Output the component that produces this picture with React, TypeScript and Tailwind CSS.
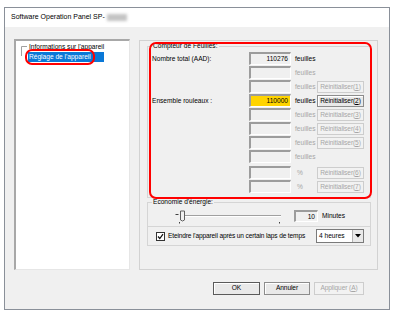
import React from 'react'

type Row = {
  label?: string
  value?: string
  yellow?: boolean
  unit: string
  unitOn?: boolean
  btn?: string
  btnOn?: boolean
  gap?: boolean
}

const rows: Row[] = [
  { label: 'Nombre total (AAD):', value: '110276', unit: 'feuilles', unitOn: true },
  { unit: 'feuilles' },
  { unit: 'feuilles', btn: '1' },
  { label: 'Ensemble rouleaux :', value: '110000', yellow: true, unit: 'feuilles', unitOn: true, btn: '2', btnOn: true },
  { unit: 'feuilles', btn: '3' },
  { unit: 'feuilles', btn: '4' },
  { unit: 'feuilles', btn: '5' },
  { unit: 'feuilles' },
  { unit: '%', btn: '6', gap: true },
  { unit: '%', btn: '7' },
]

function WinButton({ children, enabled, isDefault, width }: { children: React.ReactNode; enabled?: boolean; isDefault?: boolean; width: string }) {
  return (
    <div
      className={
        'flex items-center justify-center h-[12px] leading-none whitespace-nowrap tracking-[-0.1px] ' +
        width +
        (enabled
          ? isDefault
            ? ' border border-[#5a5a5a] bg-[#e9e9e9] text-black shadow-[inset_1px_1px_0_#ffffff]'
            : ' border border-[#8c8c8c] bg-[#e9e9e9] text-black shadow-[inset_1px_1px_0_#ffffff]'
          : ' border border-[#cdcdcd] bg-[#f2f2f2] text-[#a6a6a6]')
      }
    >
      {children}
    </div>
  )
}

export default function App() {
  return (
    <div className="w-[393px] h-[315px] bg-white pt-[7px] pl-[4px] font-['Liberation_Sans',Arial,sans-serif] text-[6.6px] text-black">
      <div className="w-[386px] h-[303px] border border-[#8a9099] flex flex-col">
        {/* title bar */}
        <div className="h-[19px] bg-white flex items-center pl-[6px] text-[7px]">
          <span>Software Operation Panel SP-</span>
          <span className="ml-[2px] w-[20px] h-[7px] bg-[#c4c4c4] blur-[1.5px]" />
        </div>

        <div className="flex-1 bg-[#f0f0f0] flex flex-col">
          <div className="flex pt-[12px] pl-[9px] gap-[9px]">
            {/* tree */}
            <div className="relative w-[116px] h-[231px] bg-white border-t-2 border-l-2 border-t-[#a8a8a8] border-l-[#a8a8a8] border-r border-b border-r-[#e6e6e6] border-b-[#e6e6e6]">
              <div className="flex pt-[1px]">
                <svg width="7" height="20" className="shrink-0 ml-[5px] mt-[3px]">
                  <path d="M0.5 1.5 H6 M0.5 1.5 V11" stroke="#a0a0a0" strokeWidth="1" fill="none" />
                </svg>
                <div className="flex flex-col">
                  <div className="h-[10px] leading-[10px] pl-[1px]">Informations sur l'appareil</div>
                  <div className="h-[10px] leading-[10px] px-[1px] bg-[#0a78d7] text-white">Réglage de l'appareil</div>
                </div>
              </div>
              <div className="absolute left-[9px] top-[8px] w-[70px] h-[16px] border-2 border-[#ff0000] rounded-[7px]" />
            </div>

            {/* panel */}
            <div className="relative mt-[1px] w-[239px] h-[230px] border border-[#d2d2d2] pl-[7px] pr-[6px]">
              <fieldset className="mt-[1px] border border-[#d5d5d5] pb-[3px]">
                <legend className="ml-[4px] px-[1px] leading-[8px]">Compteur de Feuilles:</legend>
                <div className="flex flex-col pt-[2px] pl-[4px]">
                  {rows.map((r, i) => (
                    <div key={i} className={'flex items-center h-[14px]' + (r.gap ? ' mt-[2px]' : '')}>
                      <div className="w-[97px]">{r.label}</div>
                      <div
                        className={
                          'w-[42px] h-[13px] mb-[1px] border-t-2 border-l-2 border-t-[#9c9c9c] border-l-[#9c9c9c] border-r border-b border-r-white border-b-white text-right pr-[2px] leading-[10px] ' +
                          (r.yellow ? 'bg-[#ffd400]' : 'bg-[#f0f0f0]')
                        }
                      >
                        {r.value}
                      </div>
                      <div className={'w-[26px] ' + (r.unit === '%' ? 'pl-[6px] ' : 'pl-[4px] ') + (r.unitOn ? 'text-black' : 'text-[#a6a6a6]')}>{r.unit}</div>
                      {r.btn && (
                        <WinButton enabled={r.btnOn} width="w-[47px]">
                          Réinitialiser(<span className="underline">{r.btn}</span>)
                        </WinButton>
                      )}
                    </div>
                  ))}
                </div>
              </fieldset>

              <fieldset className="border border-[#d5d5d5]">
                <legend className="ml-[4px] px-[1px] leading-[8px]">Economie d'énergie:</legend>
                <div className="flex items-center h-[20px] pl-[27px]">
                  <svg width="110" height="16" className="shrink-0">
                    <path d="M0.5 6.5 H3.5" stroke="#404040" strokeWidth="1" />
                    <path d="M5 7.5 H106" stroke="#a0a0a0" strokeWidth="1" />
                    <path d="M5 8.5 H106" stroke="#ffffff" strokeWidth="1" />
                    <path d="M5.5 3 V12 L7.5 13 L9.5 12 V3 Z" fill="#f0f0f0" stroke="#606060" strokeWidth="1" />
                    <path d="M4.5 14 V15.5" stroke="#404040" strokeWidth="1" />
                    <path d="M104.5 14 V15.5" stroke="#404040" strokeWidth="1" />
                  </svg>
                  <div className="ml-[9px] w-[24px] h-[12px] border-t-2 border-l-2 border-t-[#9c9c9c] border-l-[#9c9c9c] border-r border-b border-r-white border-b-white text-right pr-[2px] leading-[9px]">
                    10
                  </div>
                  <div className="ml-[4px]">Minutes</div>
                </div>
              </fieldset>
              <div className="flex items-center h-[19px] border-x border-b border-[#d5d5d5] pl-[8px]">
                <div className="w-[9px] h-[9px] border border-[#333333] bg-white flex items-center justify-center">
                  <svg width="7" height="7">
                    <path d="M1 3.5 L2.8 5.5 L6 1.2" stroke="#111" strokeWidth="1.2" fill="none" />
                  </svg>
                </div>
                <div className="ml-[3px] w-[148px] whitespace-nowrap tracking-[-0.15px]">Eteindre l'appareil après un certain laps de temps</div>
                <div className="flex items-center w-[48px] h-[14px] border border-[#7a7a7a] bg-white">
                  <div className="flex-1 pl-[2px] leading-none">4 heures</div>
                  <div className="w-[11px] h-[12px] bg-[#e9e9e9] border-l border-[#b5b5b5] flex items-center justify-center">
                    <svg width="6" height="4">
                      <path d="M0 0 H6 L3 3.5 Z" fill="#000" />
                    </svg>
                  </div>
                </div>
              </div>

              <div className="absolute left-[9px] top-[1px] w-[223px] h-[157px] border-2 border-[#ff0000] rounded-[7px]" />
            </div>
          </div>

          <div className="flex justify-end gap-[4px] pr-[25px] mt-[12px]">
            <WinButton enabled isDefault width="w-[47px] h-[13px]">OK</WinButton>
            <WinButton enabled width="w-[46px] h-[13px]">Annuler</WinButton>
            <WinButton width="w-[50px] h-[13px]">
              Appliquer (<span className="underline">A</span>)
            </WinButton>
          </div>
        </div>
      </div>
    </div>
  )
}
